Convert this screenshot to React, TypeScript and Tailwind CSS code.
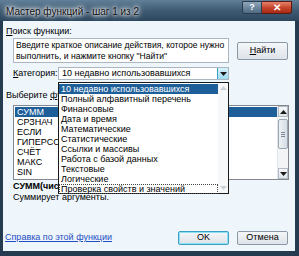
import React from 'react';

const categories = [
  '10 недавно использовавшихся',
  'Полный алфавитный перечень',
  'Финансовые',
  'Дата и время',
  'Математические',
  'Статистические',
  'Ссылки и массивы',
  'Работа с базой данных',
  'Текстовые',
  'Логические',
  'Проверка свойств и значений',
];

const functions = ['СУММ', 'СРЗНАЧ', 'ЕСЛИ', 'ГИПЕРССЫЛКА', 'СЧЁТ', 'МАКС', 'SIN'];

const font = "font-['Liberation_Sans',Arial,sans-serif]";

const Button = ({ label, def }: { label: React.ReactNode; def?: boolean }) => (
  <div
    className={`h-full w-[51px] flex items-center justify-center rounded-[2px] border text-[9px] text-black bg-gradient-to-b from-[#f5f7f9] to-[#dde3e9] ${
      def ? 'border-[#3c9fc4] shadow-[inset_0_0_0_1px_#8ee0f4]' : 'border-[#8b98a5]'
    }`}
  >
    {label}
  </div>
);

const Arrow = ({ down, faded }: { down?: boolean; faded?: boolean }) => (
  <svg width="7" height="4" viewBox="0 0 7 4">
    <path d={down ? 'M0 0H7L3.5 4Z' : 'M0 4H7L3.5 0Z'} fill={faded ? '#c8d0d8' : '#1a1a1a'} />
  </svg>
);

export default function App() {
  return (
    <div className={`w-[299px] h-[256px] flex flex-col bg-[#243b50] pl-[3px] pr-[4px] pb-[5px] ${font}`}>
      {/* title bar */}
      <div className="h-[21px] -ml-[3px] -mr-[4px] pl-[6px] pr-[7px] flex items-start bg-gradient-to-b from-[#617f98] via-[#3f5b74] to-[#2c465d]">
        <span className="mt-[4px] text-[10px] text-[#111] [text-shadow:0_0_3px_#fff,0_0_5px_#fff,0_0_7px_#fff]">
          Мастер функций - шаг 1 из 2
        </span>
        <div className="ml-auto flex mt-[1px]">
          <div className="w-[20px] h-[13px] flex items-center justify-center rounded-bl-[3px] border border-[#2a3c4c] bg-gradient-to-b from-[#8ea6ba] to-[#4f6a82] text-white text-[9px] font-bold leading-none">
            ?
          </div>
          <div className="w-[30px] h-[13px] flex items-center justify-center rounded-br-[3px] border border-l-0 border-[#5a1a10] bg-gradient-to-b from-[#e6826c] via-[#c8452c] to-[#a82a14] text-white text-[10px] font-bold leading-none">
            ✕
          </div>
        </div>
      </div>

      {/* body */}
      <div className="relative flex-1 flex flex-col bg-[#eef5fb] text-[9px] text-black">
        <div className="pl-[3px] pt-[5px] h-[17px] leading-[11px]">
          <span className="underline">П</span>оиск функции:
        </div>

        <div className="flex pl-[10px] h-[25px]">
          <div className="w-[216px] h-full border border-[#abb6c2] bg-white px-[2px] pt-[1px] leading-[11px] text-[8.6px]">
            Введите краткое описание действия, которое нужно выполнить, и нажмите кнопку "Найти"
          </div>
          <div className="ml-[8px] mt-[4px] h-[18px]">
            <Button label={<><span className="underline">Н</span>айти</>} />
          </div>
        </div>

        <div className="flex items-center pl-[10px] mt-[4px] h-[13px]">
          <span className="w-[45px]">
            <span className="underline">К</span>атегория:
          </span>
          <div className="w-[171px] h-full flex items-center border border-[#abb6c2] bg-white pl-[3px]">
            <span className="flex-1">10 недавно использовавшихся</span>
            <div className="w-[11px] h-full flex items-center justify-center border-l border-[#3c9fc4] bg-gradient-to-b from-[#d6f2fb] to-[#9edcf0]">
              <Arrow down />
            </div>
          </div>
        </div>

        <div className="pl-[3px] mt-[9px] h-[12px] leading-[12px]">
          Выберите <span className="underline">ф</span>ункцию:
        </div>

        <div className="ml-[10px] mt-[4px] w-[276px] h-[75px] flex border border-[#828790] bg-white">
          <div className="flex-1 pt-[1px] pl-[1px]">
            {functions.map((f, i) => (
              <div
                key={f}
                className={`h-[10px] leading-[10px] pl-[2px] ${i === 0 ? 'bg-[#1e5f9a] text-white' : ''}`}
              >
                {f}
              </div>
            ))}
          </div>
          <div className="w-[11px] flex flex-col bg-[#f2f4f6] border-l border-[#e3e6ea]">
            <div className="h-[11px] flex items-center justify-center border border-[#b3bcc6] bg-gradient-to-b from-[#f6f8fa] to-[#dfe4ea]">
              <Arrow />
            </div>
            <div className="mt-[2px] h-[30px] flex items-center justify-center border border-[#9aa6b2] rounded-[2px] bg-gradient-to-r from-[#eef2f5] to-[#d6dde4]">
              <div className="flex flex-col gap-[1px]">
                <div className="w-[4px] h-px bg-[#7d8a97]" />
                <div className="w-[4px] h-px bg-[#7d8a97]" />
                <div className="w-[4px] h-px bg-[#7d8a97]" />
              </div>
            </div>
            <div className="flex-1" />
            <div className="h-[11px] flex items-center justify-center border border-[#b3bcc6] bg-gradient-to-b from-[#f6f8fa] to-[#dfe4ea]">
              <Arrow down />
            </div>
          </div>
        </div>

        <div className="pl-[10px] mt-[1px] h-[11px] leading-[11px] font-bold">СУММ(число1;число2;...)</div>
        <div className="pl-[10px] h-[11px] leading-[11px]">Суммирует аргументы.</div>

        <div className="mt-auto mb-[6px] h-[14px] flex items-center pl-[2px] pr-[7px]">
          <span className="text-[#1f4ec4] underline">Справка по этой функции</span>
          <div className="ml-auto flex gap-[8px] h-full">
            <Button label="OK" def />
            <Button label="Отмена" />
          </div>
        </div>

        {/* opened category dropdown */}
        <div className="absolute left-[55px] top-[61px] w-[171px] h-[112px] flex border border-[#1a1a1a] bg-white">
          <div className="flex-1 pt-[1px]">
            {categories.map((c, i) => (
              <div
                key={c}
                className={`h-[10px] leading-[10px] pl-[2px] ${
                  i === 0 ? 'bg-[#1e5f9a] text-white' : ''
                } ${i === categories.length - 1 ? 'outline outline-1 outline-dotted outline-[#444] -outline-offset-1' : ''}`}
              >
                {c}
              </div>
            ))}
          </div>
          <div className="w-[10px] flex flex-col justify-between py-[3px] items-center bg-[#f7f8fa]">
            <Arrow faded />
            <Arrow down faded />
          </div>
        </div>
      </div>
    </div>
  );
}
